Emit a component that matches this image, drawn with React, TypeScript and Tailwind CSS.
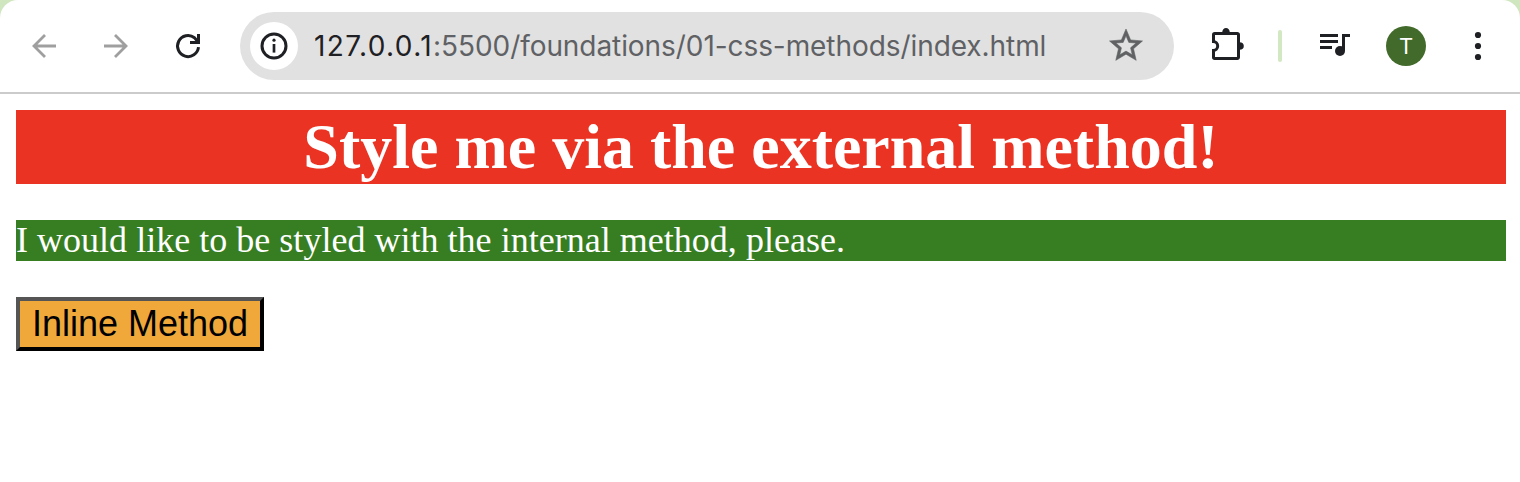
import React from "react";

function BackIcon() {
  return (
    <svg className="size-10" viewBox="0 0 40 40" fill="none" stroke="#9f9f9f" strokeWidth="2.8">
      <path d="M32 20H10M21 9 10 20l11 11" />
    </svg>
  );
}

function ForwardIcon() {
  return (
    <svg className="size-10" viewBox="0 0 40 40" fill="none" stroke="#9f9f9f" strokeWidth="2.8">
      <path d="M8 20h22M19 9l11 11-11 11" />
    </svg>
  );
}

function ReloadIcon() {
  return (
    <svg className="size-10" viewBox="0 0 40 40" fill="none" stroke="#1f2024" strokeWidth="3">
      <path d="M30.5 21.2A10.5 10.5 0 1 1 26.5 11.8L29.6 15.3" />
      <path d="M30.5 8v8.5H22" />
    </svg>
  );
}

function InfoIcon() {
  return (
    <svg className="size-12" viewBox="0 0 48 48" fill="none">
      <circle cx="24" cy="24" r="12" stroke="#1f2024" strokeWidth="3" />
      <circle cx="24" cy="18.2" r="1.6" fill="#1f2024" />
      <path d="M24 22V30.6" stroke="#1f2024" strokeWidth="2.7" />
    </svg>
  );
}

function StarIcon() {
  return (
    <svg className="size-10" viewBox="0 0 40 40" fill="#5f6163" stroke="#5f6163" strokeWidth="0.35">
      <path
        transform="translate(.2 -.3) scale(1.65)"
        d="M22 9.24l-7.19-.62L12 2 9.19 8.63 2 9.24l5.46 4.73L5.82 21 12 17.27 18.18 21l-1.63-7.03L22 9.24zM12 15.4l-3.76 2.27 1-4.28-3.32-2.88 4.38-.38L12 6.1l1.71 4.04 4.38.38-3.32 2.88 1 4.28L12 15.4z"
      />
    </svg>
  );
}

function PuzzleIcon() {
  return (
    <svg className="size-10" viewBox="0 0 40 40" fill="none">
      <path
        d="M5 24.5H6.2A4.4 4.4 0 0 0 6.2 15.5H5M6.5 24V31.3A1.2 1.2 0 0 0 7.7 32.5H30.3A1.2 1.2 0 0 0 31.5 31.3V8.7A1.2 1.2 0 0 0 30.3 7.5H7.7A1.2 1.2 0 0 0 6.5 8.7V16"
        stroke="#1f2024"
        strokeWidth="3"
      />
      <path d="M15.2 6.5a3.8 4.5 0 0 1 7.6 0zM32.5 16.2a4.3 3.8 0 0 1 0 7.6z" fill="#1f2024" />
    </svg>
  );
}

function MediaIcon() {
  return (
    <svg className="size-10" viewBox="0 0 40 40" fill="#1f2024">
      <path d="M6 8h18v3H6zM6 14h18v3H6zM6 20h12v3H6z" />
      <path d="M28 8h8v3h-5v14h-3z" />
      <circle cx="26" cy="25" r="5" />
    </svg>
  );
}

function MenuIcon() {
  return (
    <svg className="size-10" viewBox="0 0 40 40" fill="#1f2024">
      <circle cx="20" cy="9" r="3.1" />
      <circle cx="20" cy="20" r="3.1" />
      <circle cx="20" cy="31" r="3.1" />
    </svg>
  );
}

function Toolbar() {
  return (
    <header className="bg-[#cfe6bf]">
      <div className="flex h-[94px] items-center rounded-t-[18px] border-b-2 border-[#cbcbcb] bg-white pl-6">
        <nav className="flex gap-8">
          <BackIcon />
          <ForwardIcon />
          <ReloadIcon />
        </nav>
        <div className="ml-8 flex h-[68px] w-[934px] items-center rounded-full bg-[#e1e1e1] pl-[10px] pr-7">
          <span className="rounded-full bg-white">
            <InfoIcon />
          </span>
          <span className="ml-4 whitespace-nowrap font-['Inter',sans-serif] text-[28px] leading-[34px] tracking-[-0.07px] text-[#5f6165]">
            <span className="tracking-[1.4px] text-[#1f2024]">127.0.0.1</span>
            :5500/foundations/01-css-methods/index.html
          </span>
          <span className="ml-auto">
            <StarIcon />
          </span>
        </div>
        <span className="ml-[33px]">
          <PuzzleIcon />
        </span>
        <span className="ml-[31px] h-8 w-1 rounded-sm bg-[#d1e8c2]" />
        <span className="ml-8">
          <MediaIcon />
        </span>
        <span className="ml-8 flex size-10 items-center justify-center rounded-full bg-[#426a2a] font-['Roboto',sans-serif] text-[22px] text-white">
          T
        </span>
        <span className="ml-8">
          <MenuIcon />
        </span>
      </div>
    </header>
  );
}

export default function App() {
  return (
    <div className="h-[482px] overflow-hidden bg-white">
      <Toolbar />
      <main className="pl-4 pr-[14px] pt-4">
        <h1 className="h-[74px] bg-[#eb3323] text-center font-['Liberation_Serif',serif] text-[64px] leading-[74px] font-bold text-white">
          Style me via the external method!
        </h1>
        <p className="mt-9 h-[41px] bg-[#377e22] font-['Liberation_Serif',serif] text-[36px] leading-[41px] tracking-[0.02px] text-white">
          I would like to be styled with the internal method, please.
        </p>
        <button className="mt-9 flex h-[54px] w-[248px] items-center justify-center border-4 border-t-[#555] border-r-black border-b-black border-l-[#555] bg-[#f0a83b] font-['Liberation_Sans',sans-serif] text-[36px] leading-[42px] whitespace-nowrap text-black">
          Inline Method
        </button>
      </main>
    </div>
  );
}
